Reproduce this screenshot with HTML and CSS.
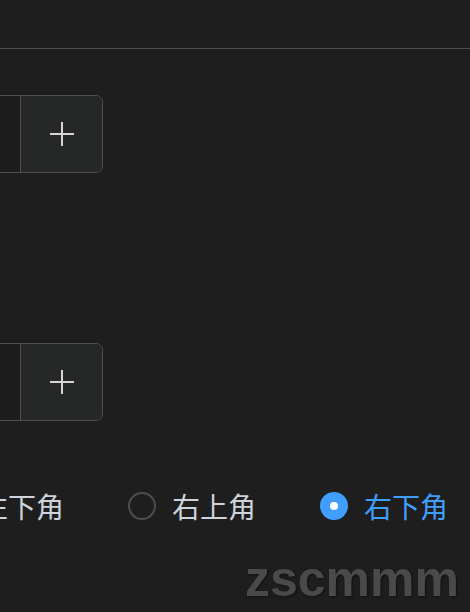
FILE: index.html
```html
<!DOCTYPE html>
<html lang="zh">
<head>
<meta charset="utf-8">
<link rel="stylesheet" href="styles.css">
</head>
<body>
<div class="page">
  <div class="topbar"></div>
  <div class="content">
    <div class="num num-first">
      <div class="num-input"></div>
      <div class="num-btn">
        <svg width="24" height="24" viewBox="0 0 24 24"><path d="M12 0V24M0 12H24" stroke="#d6d6d6" stroke-width="2" fill="none"/></svg>
      </div>
    </div>
    <div class="num num-second">
      <div class="num-input"></div>
      <div class="num-btn">
        <svg width="24" height="24" viewBox="0 0 24 24"><path d="M12 0V24M0 12H24" stroke="#d6d6d6" stroke-width="2" fill="none"/></svg>
      </div>
    </div>
    <div class="radios">
      <label class="radio"><span class="dot"></span><span class="txt">左下角</span></label>
      <label class="radio"><span class="dot"></span><span class="txt">右上角</span></label>
      <label class="radio checked"><span class="dot"></span><span class="txt">右下角</span></label>
    </div>
  </div>
  <div class="watermark">zscmmm</div>
</div>
</body>
</html>
```
FILE: styles.css
```css
html, body {
  margin: 0;
  padding: 0;
  background: #1e1e1e;
}
.page {
  position: relative;
  width: 470px;
  height: 612px;
  overflow: hidden;
  font-family: "Noto Sans CJK SC", "Noto Sans", sans-serif;
}
.topbar {
  height: 48px;
  border-bottom: 1px solid #4c4c4c;
}
.content {
  display: flex;
  flex-direction: column;
  align-items: flex-start;
}
.num {
  display: flex;
  width: 360px;
  height: 78px;
  margin-left: -257px;
  border: 1px solid #4f5052;
  border-radius: 7px;
  box-sizing: border-box;
  overflow: hidden;
}
.num-first { margin-top: 46px; }
.num-second { margin-top: 170px; }
.num-input {
  flex: 1;
  background: #1d1d1d;
}
.num-btn {
  width: 81px;
  border-left: 1px solid #4f5052;
  background: #262727;
  display: flex;
  align-items: center;
  justify-content: center;
}
.num-btn svg { display: block; }
.radios {
  display: flex;
  align-items: center;
  gap: 64px;
  margin-top: 71px;
  margin-left: -64px;
  height: 28px;
}
.radio {
  display: flex;
  align-items: center;
  gap: 16px;
  font-size: 28px;
  line-height: 28px;
  color: #cfd3dc;
  white-space: nowrap;
}
.dot {
  width: 28px;
  height: 28px;
  box-sizing: border-box;
  border: 2px solid #4c4d4f;
  border-radius: 50%;
  flex: none;
}
.checked { color: #409eff; }
.checked .dot {
  border-color: #409eff;
  background: #409eff;
  position: relative;
}
.checked .dot::after {
  content: "";
  position: absolute;
  left: 50%;
  top: 50%;
  width: 8px;
  height: 8px;
  margin: -4px 0 0 -4px;
  border-radius: 50%;
  background: #fff;
}
.txt { display: block; }
.watermark {
  position: absolute;
  left: 245px;
  top: 549px;
  font-family: "Liberation Sans", Arial, sans-serif;
  font-weight: bold;
  font-size: 50px;
  line-height: 60px;
  color: #4a4a4a;
  text-shadow: 1px 1px 2px #111;
}
```
